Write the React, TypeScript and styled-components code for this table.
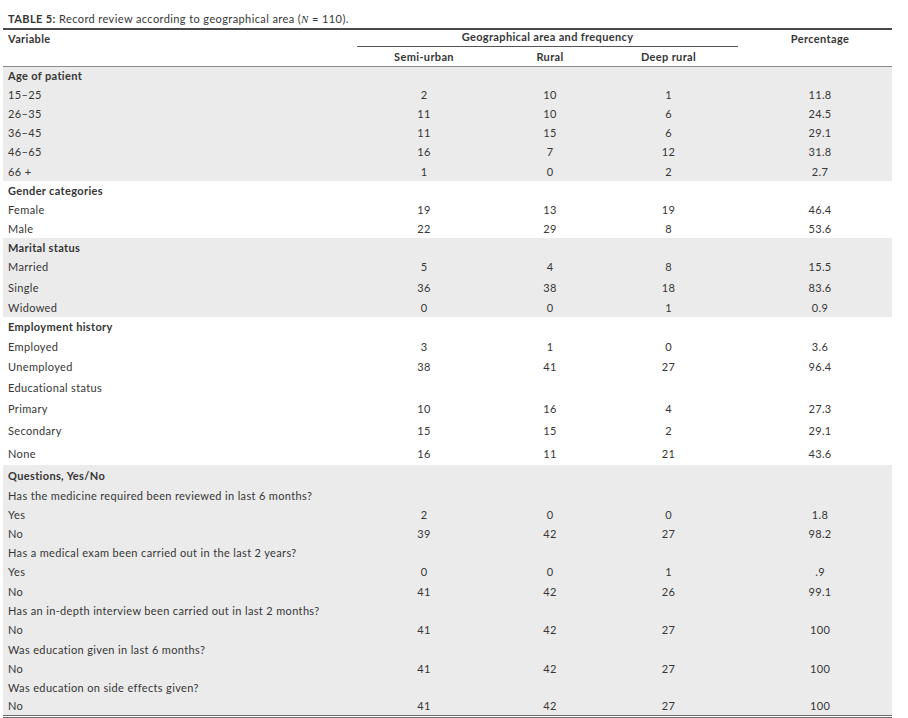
import styled, { createGlobalStyle } from "styled-components";

const GlobalStyle = createGlobalStyle`
	html, body {
		margin: 0;
		padding: 0;
		background: #ffffff;
	}
	body {
		font-family: Lato, "Open Sans", sans-serif;
		color: #363636;
	}
`;

const Page = styled.div`
	width: 908px;
	height: 718px;
	padding: 12px 16px 0 3px;
	box-sizing: border-box;
`;

const Caption = styled.div`
	font-size: 11px;
	line-height: 14px;
	padding-left: 5px;
	height: 16px;
	letter-spacing: 0.4px;
	b {
		font-weight: 700;
	}
	i {
		font-family: "Liberation Serif", serif;
	}
`;

const Table = styled.table`
	width: 889px;
	border-collapse: collapse;
	table-layout: fixed;
	font-size: 11px;
	letter-spacing: 0.35px;
	border-top: 2px solid #4a4a4a;
	border-bottom: 3px double #6a6a6a;
`;

const HeadRow = styled.tr<{ $h: number; $rule?: boolean }>`
	height: ${(p) => p.$h}px;
	border-bottom: ${(p) => (p.$rule ? "1px solid #8a8a8a" : "none")};
`;

const HeadCell = styled.th<{ $align?: string; $pad?: string; $rule?: boolean }>`
	font-weight: 700;
	text-align: ${(p) => p.$align || "center"};
	padding: ${(p) => p.$pad || "0"};
	vertical-align: ${(p) => (p.$rule ? "bottom" : "middle")};
	line-height: 14px;
	span {
		display: block;
		border-bottom: ${(p) => (p.$rule ? "1px solid #555" : "none")};
		padding-bottom: 2px;
	}
`;

const Row = styled.tr<{ $shade?: boolean; $h?: number }>`
	height: ${(p) => p.$h || 19}px;
	background: ${(p) => (p.$shade ? "#ebebeb" : "#ffffff")};
`;

const Label = styled.td<{ $bold?: boolean }>`
	padding: 0 0 0 5px;
	font-weight: ${(p) => (p.$bold ? 700 : 400)};
	white-space: nowrap;
	vertical-align: middle;
	line-height: 14px;
`;

const Num = styled.td<{ $shift?: number }>`
	text-align: center;
	padding: ${(p) =>
		p.$shift && p.$shift > 0 ? `0 0 0 ${p.$shift * 2}px` : p.$shift ? `0 ${-p.$shift * 2}px 0 0` : "0"};
	vertical-align: middle;
	line-height: 14px;
`;

type R = {
	label: string;
	vals?: string[];
	bold?: boolean;
	h?: number;
};

const sections: { shade: boolean; rows: R[] }[] = [
	{
		shade: true,
		rows: [
			{ label: "Age of patient", bold: true },
			{ label: "15–25", vals: ["2", "10", "1", "11.8"] },
			{ label: "26–35", vals: ["11", "10", "6", "24.5"] },
			{ label: "36–45", vals: ["11", "15", "6", "29.1"] },
			{ label: "46–65", vals: ["16", "7", "12", "31.8"], h: 20 },
			{ label: "66 +", vals: ["1", "0", "2", "2.7"], h: 19 },
		],
	},
	{
		shade: false,
		rows: [
			{ label: "Gender categories", bold: true },
			{ label: "Female", vals: ["19", "13", "19", "46.4"] },
			{ label: "Male", vals: ["22", "29", "8", "53.6"] },
		],
	},
	{
		shade: true,
		rows: [
			{ label: "Marital status", bold: true },
			{ label: "Married", vals: ["5", "4", "8", "15.5"], h: 20 },
			{ label: "Single", vals: ["36", "38", "18", "83.6"], h: 21 },
			{ label: "Widowed", vals: ["0", "0", "1", "0.9"], h: 19 },
		],
	},
	{
		shade: false,
		rows: [
			{ label: "Employment history", bold: true, h: 20 },
			{ label: "Employed", vals: ["3", "1", "0", "3.6"], h: 20 },
			{ label: "Unemployed", vals: ["38", "41", "27", "96.4"], h: 20 },
			{ label: "Educational status", h: 21 },
			{ label: "Primary", vals: ["10", "16", "4", "27.3"], h: 22 },
			{ label: "Secondary", vals: ["15", "15", "2", "29.1"], h: 22 },
			{ label: "None", vals: ["16", "11", "21", "43.6"], h: 23 },
		],
	},
	{
		shade: true,
		rows: [
			{ label: "Questions, Yes/No", bold: true, h: 21 },
			{ label: "Has the medicine required been reviewed in last 6 months?" },
			{ label: "Yes", vals: ["2", "0", "0", "1.8"] },
			{ label: "No", vals: ["39", "42", "27", "98.2"] },
			{ label: "Has a medical exam been carried out in the last 2 years?" },
			{ label: "Yes", vals: ["0", "0", "1", ".9"], h: 20 },
			{ label: "No", vals: ["41", "42", "26", "99.1"] },
			{ label: "Has an in-depth interview been carried out in last 2 months?" },
			{ label: "No", vals: ["41", "42", "27", "100"], h: 20 },
			{ label: "Was education given in last 6 months?" },
			{ label: "No", vals: ["41", "42", "27", "100"] },
			{ label: "Was education on side effects given?" },
			{ label: "No", vals: ["41", "42", "27", "100"], h: 19 },
		],
	},
];

const shifts = [0, 0, -5, 5];

export default function App() {
	return (
		<Page>
			<GlobalStyle />
			<Caption>
				<b>TABLE 5:</b> Record review according to geographical area (<i>N</i> = 110).
			</Caption>
			<Table>
				<colgroup>
					<col style={{ width: 354 }} />
					<col style={{ width: 134 }} />
					<col style={{ width: 118 }} />
					<col style={{ width: 129 }} />
					<col style={{ width: 154 }} />
				</colgroup>
				<thead>
					<HeadRow $h={17}>
						<HeadCell $align="left" $pad="0 0 0 5px">
							Variable
						</HeadCell>
						<HeadCell colSpan={3} $rule>
							<span>Geographical area and frequency</span>
						</HeadCell>
						<HeadCell $pad="0 0 0 10px">Percentage</HeadCell>
					</HeadRow>
					<HeadRow $h={19} $rule>
						<HeadCell />
						<HeadCell $pad="2px 0 0 0">Semi-urban</HeadCell>
						<HeadCell $pad="2px 0 0 0">Rural</HeadCell>
						<HeadCell $pad="2px 10px 0 0">Deep rural</HeadCell>
						<HeadCell />
					</HeadRow>
				</thead>
				<tbody>
					{sections.map((s, si) =>
						s.rows.map((r, ri) => (
							<Row key={`${si}-${ri}`} $shade={s.shade} $h={r.h}>
								<Label $bold={r.bold}>{r.label}</Label>
								{[0, 1, 2, 3].map((c) => (
									<Num key={c} $shift={shifts[c]}>
										{r.vals ? r.vals[c] : ""}
									</Num>
								))}
							</Row>
						))
					)}
				</tbody>
			</Table>
		</Page>
	);
}
